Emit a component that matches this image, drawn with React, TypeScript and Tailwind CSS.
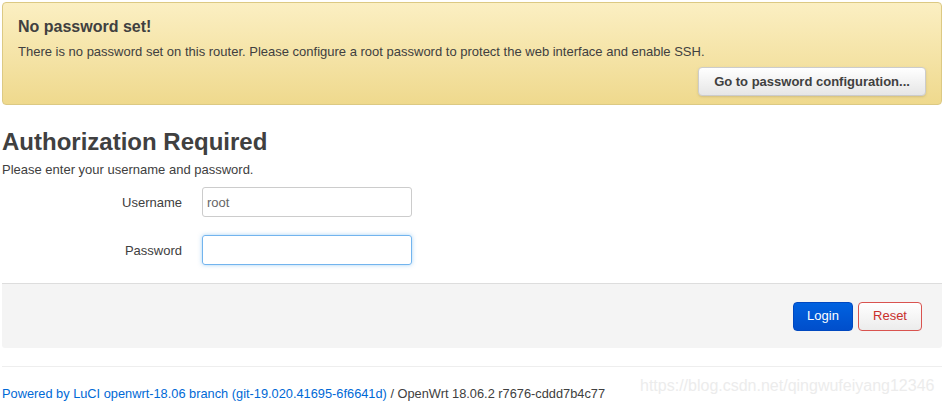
export default function App() {
  return (
    <div
      className="relative w-[944px] h-[405px] bg-white text-[#404040] overflow-hidden"
      style={{ fontFamily: '"Liberation Sans", Arial, sans-serif' }}
    >
      {/* password warning */}
      <div className="mx-[2px] mt-[2px] h-[103px] rounded-[4px] border border-[#dcc983] bg-gradient-to-b from-[#fbefc2] to-[#efd98d] px-[15px] pt-[13px]">
        <h3 className="text-[16px] font-bold leading-[22px] text-[#404040]">No password set!</h3>
        <p className="mt-[5px] text-[13px] leading-[18px] text-[#404040]">
          There is no password set on this router. Please configure a root password to protect the web interface and enable SSH.
        </p>
        <div className="mt-[6px] flex justify-end">
          <button className="h-[29px] w-[228px] rounded-[4px] border border-[#ccc] bg-gradient-to-b from-white to-[#e6e6e6] text-[13px] font-bold text-[#404040] shadow-sm">
            Go to password configuration...
          </button>
        </div>
      </div>

      {/* login form */}
      <div className="px-[2px] pt-[22px]">
        <h2 className="text-[24px] font-bold leading-[30px] text-[#404040]">Authorization Required</h2>
        <p className="mt-[4px] text-[13px] leading-[18px]">Please enter your username and password.</p>
        <div className="mt-[8px] flex flex-col gap-[18px]">
          <div className="flex items-center">
            <label className="w-[180px] pt-[1px] text-right text-[13px]">Username</label>
            <input
              className="ml-[20px] h-[30px] w-[210px] rounded-[3px] border border-[#ccc] px-[4px] text-[13px] text-[#666] outline-none"
              defaultValue="root"
            />
          </div>
          <div className="flex items-center">
            <label className="w-[180px] pt-[1px] text-right text-[13px]">Password</label>
            <input
              type="password"
              className="ml-[20px] h-[30px] w-[210px] rounded-[3px] border border-[#72b4ee] px-[4px] text-[13px] outline-none shadow-[0_0_4px_rgba(82,168,236,0.5)]"
            />
          </div>
        </div>
      </div>

      <div className="mx-[2px] mt-[18px] flex h-[65px] items-center justify-end gap-[5px] rounded-b-[3px] border-t border-[#ddd] bg-[#f4f4f4] pr-[20px]">
        <button className="h-[29px] w-[60px] rounded-[4px] border border-[#0048c0] bg-gradient-to-b from-[#0062e0] to-[#004ecb] text-[13px] text-white">
          Login
        </button>
        <button className="h-[29px] w-[64px] rounded-[4px] border border-[#d9534f] bg-gradient-to-b from-white to-[#ececec] text-[13px] text-[#c9302c]">
          Reset
        </button>
      </div>

      <div className="mx-[2px] mt-[18px] border-t border-[#eee]" />

      <div className="px-[2px] pt-[18px] text-[12.8px] leading-[18px]">
        <a className="text-[#0069d6]">Powered by LuCI openwrt-18.06 branch (git-19.020.41695-6f6641d)</a>
        <span> / OpenWrt 18.06.2 r7676-cddd7b4c77</span>
      </div>

      <div className="absolute left-[640px] top-[374px] text-[16px] text-[#ececec]">
        https://blog.csdn.net/qingwufeiyang12346
      </div>
    </div>
  );
}
